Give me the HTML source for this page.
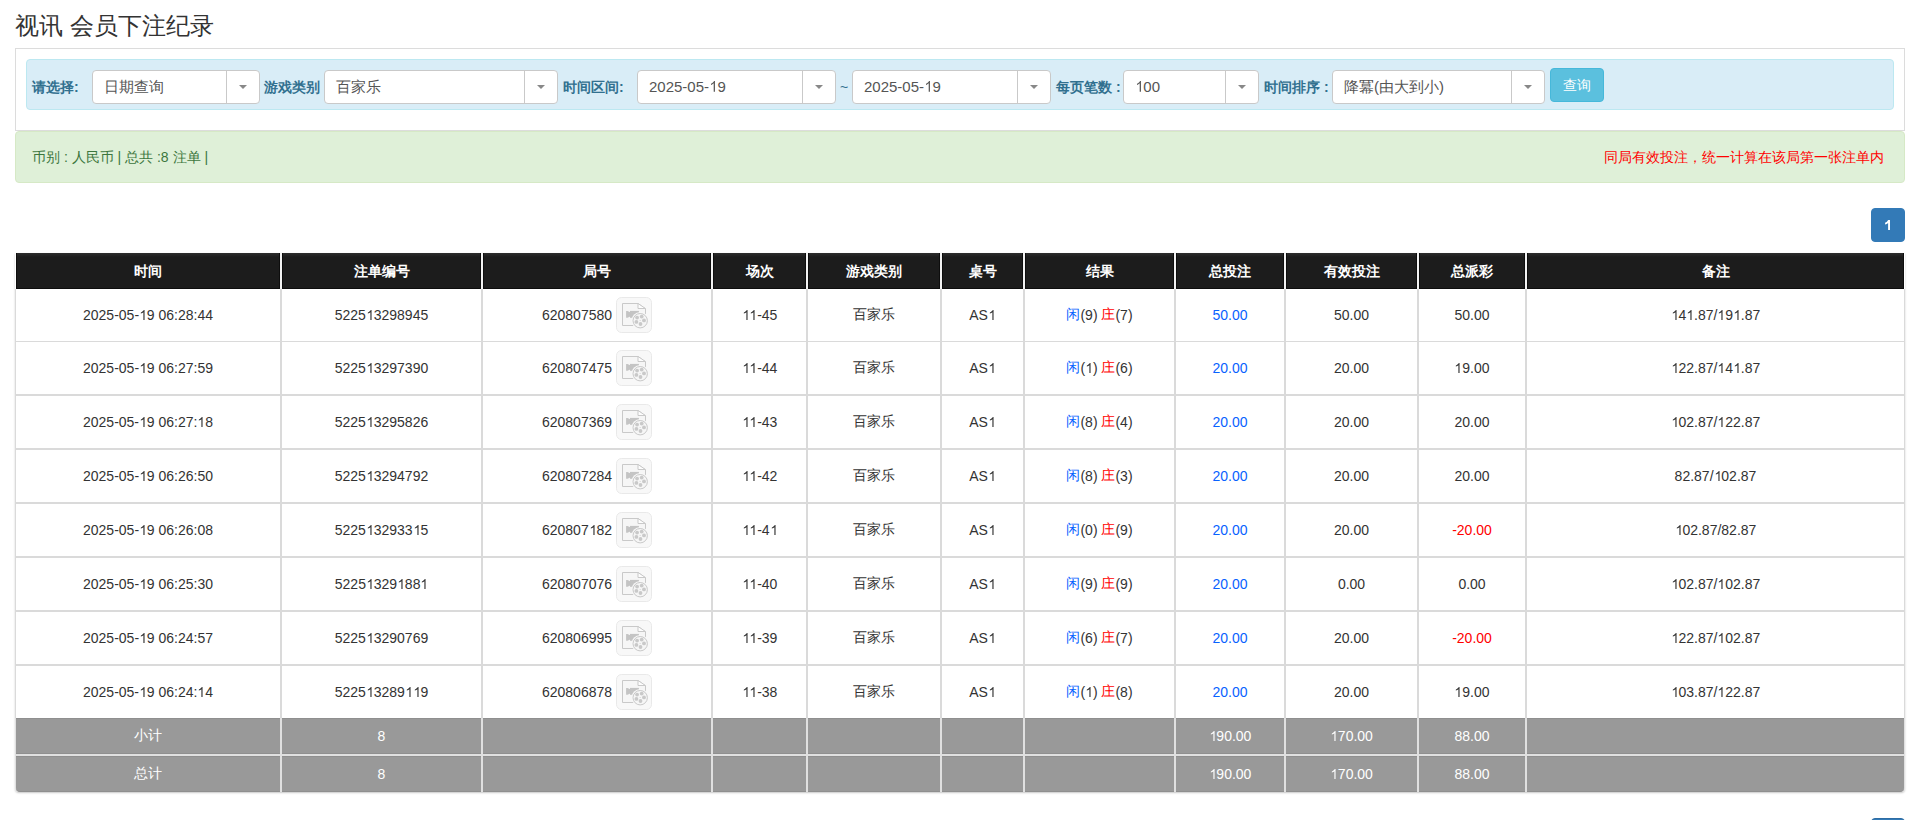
<!DOCTYPE html><html><head><meta charset="utf-8"><style>
*{box-sizing:border-box}
html,body{margin:0;padding:0;background:#fff;width:1919px;height:820px;overflow:hidden;font-family:"Liberation Sans",sans-serif;font-size:14px;color:#333}
.a{position:absolute}
.c{position:absolute;display:flex;align-items:center;justify-content:center;white-space:nowrap}
.th{padding-top:2px;background:linear-gradient(#2d2d2d,#1c1c1c 4px);color:#fff;font-weight:bold;border:1px solid #0d0d0d;border-top:0}
.td{background:#fff}
.bl{border-bottom-left-radius:4px}.br{border-bottom-right-radius:4px}
.tf{background:#999;color:#fff;border-top:1px solid #8f8f8f;border-bottom:1px solid #8f8f8f}
.one{width:0.5562em;height:0.7158em;vertical-align:baseline;fill:currentColor;overflow:visible}
.blue{color:#0862ff}
.red{color:#f00}
.lbl{position:absolute;color:#31708f;font-weight:bold;white-space:nowrap}
.sel{position:absolute;background:#fff;border:1px solid #c9c9c9;border-radius:4px;height:34px;top:70px}
.sel .t{position:absolute;left:11px;top:0;line-height:32px;font-size:15px;color:#555;white-space:nowrap}
.sel .d{position:absolute;top:0;bottom:0;width:1px;background:#c9c9c9}
.sel .ar{position:absolute;top:14px;width:0;height:0;border-left:4px solid transparent;border-right:4px solid transparent;border-top:4px solid #888}
</style></head><body>

<div class="a" style="left:15px;top:12px;font-size:24px;line-height:28px;color:#333;white-space:nowrap">视讯 会员下注纪录</div>
<div class="a" style="left:15px;top:48px;width:1890px;height:83px;border:1px solid #dcdcdc;background:#fff"></div>
<div class="a" style="left:26px;top:59px;width:1868px;height:51px;border:1px solid #bce8f1;border-radius:4px;background:#d9edf7"></div>
<div class="lbl" style="left:32px;top:78px;line-height:18px">请选择:</div>
<div class="lbl" style="left:264px;top:78px;line-height:18px">游戏类别</div>
<div class="lbl" style="left:563px;top:78px;line-height:18px">时间区间:</div>
<div class="lbl" style="left:1056px;top:78px;line-height:18px">每页笔数 :</div>
<div class="lbl" style="left:1264px;top:78px;line-height:18px">时间排序 :</div>
<div class="a" style="left:840px;top:78px;line-height:18px;color:#31708f">~</div>
<div class="sel" style="left:92px;width:168px"><div class="t">日期查询</div><div class="d" style="left:133px"></div><div class="ar" style="left:146px"></div></div>
<div class="sel" style="left:324px;width:234px"><div class="t">百家乐</div><div class="d" style="left:199px"></div><div class="ar" style="left:212px"></div></div>
<div class="sel" style="left:637px;width:199px"><div class="t">2025-05-<svg class="one" viewBox="0 -1466 1139 1466"><path d="M813 0 H643 V-1147 C590 -1106 533 -1065 463 -1024 C393 -983 330 -952 273 -930 V-1104 C373 -1151 460 -1208 535 -1274 C610 -1340 663 -1404 695 -1466 H813 Z"/></svg>9</div><div class="d" style="left:164px"></div><div class="ar" style="left:177px"></div></div>
<div class="sel" style="left:852px;width:199px"><div class="t">2025-05-<svg class="one" viewBox="0 -1466 1139 1466"><path d="M813 0 H643 V-1147 C590 -1106 533 -1065 463 -1024 C393 -983 330 -952 273 -930 V-1104 C373 -1151 460 -1208 535 -1274 C610 -1340 663 -1404 695 -1466 H813 Z"/></svg>9</div><div class="d" style="left:164px"></div><div class="ar" style="left:177px"></div></div>
<div class="sel" style="left:1123px;width:136px"><div class="t"><svg class="one" viewBox="0 -1466 1139 1466"><path d="M813 0 H643 V-1147 C590 -1106 533 -1065 463 -1024 C393 -983 330 -952 273 -930 V-1104 C373 -1151 460 -1208 535 -1274 C610 -1340 663 -1404 695 -1466 H813 Z"/></svg>00</div><div class="d" style="left:101px"></div><div class="ar" style="left:114px"></div></div>
<div class="sel" style="left:1332px;width:213px"><div class="t">降冪(由大到小)</div><div class="d" style="left:178px"></div><div class="ar" style="left:191px"></div></div>
<div class="a" style="left:1550px;top:68px;width:54px;height:34px;background:#5bc0de;border:1px solid #46b8da;border-radius:4px;color:#fff;display:flex;align-items:center;justify-content:center;padding-top:2px">查询</div>
<div class="a" style="left:15px;top:131px;width:1890px;height:52px;background:#dff0d8;border:1px solid #d6e9c6;border-radius:4px"></div>
<div class="a" style="left:32px;top:148px;line-height:18px;color:#3c763d;white-space:nowrap">币别 : 人民币 | 总共 :8 注单 |</div>
<div class="a" style="right:35px;top:148px;line-height:18px;color:#f00;white-space:nowrap">同局有效投注，统一计算在该局第一张注单内</div>
<div class="a" style="left:1871px;top:208px;width:34px;height:34px;background:#337ab7;border:1px solid #337ab7;border-radius:4px"><svg width="34" height="34" style="position:absolute;left:-1px;top:-1px" viewBox="0 0 34 34"><path d="M17.1 12 H19 V22 H17.1 V14.9 Q16 15.9 14.1 16.5 V14.8 Q16.2 14 17.1 12 Z" fill="#fff"/></svg></div>
<div class="a" style="left:1871px;top:818px;width:34px;height:34px;background:#337ab7;border:1px solid #2e6da4;border-radius:4px"></div>
<div class="a" style="left:15px;top:253px;width:1890px;height:539px;background:#fff;box-shadow:0 1px 2px rgba(0,0,0,.22);border-radius:0 0 4px 4px"></div>
<div class="a" style="left:16px;top:253px;width:1888px;height:36px;background:#f2f2f2"></div>
<div class="c th" style="left:16px;top:253px;width:264px;height:36px">时间</div>
<div class="c th" style="left:282px;top:253px;width:199px;height:36px">注单编号</div>
<div class="c th" style="left:483px;top:253px;width:228px;height:36px">局号</div>
<div class="c th" style="left:713px;top:253px;width:93px;height:36px">场次</div>
<div class="c th" style="left:808px;top:253px;width:132px;height:36px">游戏类别</div>
<div class="c th" style="left:942px;top:253px;width:81px;height:36px">桌号</div>
<div class="c th" style="left:1025px;top:253px;width:149px;height:36px">结果</div>
<div class="c th" style="left:1176px;top:253px;width:108px;height:36px">总投注</div>
<div class="c th" style="left:1286px;top:253px;width:131px;height:36px">有效投注</div>
<div class="c th" style="left:1419px;top:253px;width:106px;height:36px">总派彩</div>
<div class="c th" style="left:1527px;top:253px;width:377px;height:36px">备注</div>
<div class="a" style="left:15px;top:289px;width:1890px;height:429px;background:#dadada"></div>
<div class="c td" style="left:16px;top:289px;width:264px;height:52px">2025-05-<svg class="one" viewBox="0 -1466 1139 1466"><path d="M813 0 H643 V-1147 C590 -1106 533 -1065 463 -1024 C393 -983 330 -952 273 -930 V-1104 C373 -1151 460 -1208 535 -1274 C610 -1340 663 -1404 695 -1466 H813 Z"/></svg>9 06:28:44</div>
<div class="c td" style="left:282px;top:289px;width:199px;height:52px">5225<svg class="one" viewBox="0 -1466 1139 1466"><path d="M813 0 H643 V-1147 C590 -1106 533 -1065 463 -1024 C393 -983 330 -952 273 -930 V-1104 C373 -1151 460 -1208 535 -1274 C610 -1340 663 -1404 695 -1466 H813 Z"/></svg>3298945</div>
<div class="c td" style="left:483px;top:289px;width:228px;height:52px">620807580<span style="display:inline-block;width:36px;height:36px;margin-left:4px"><svg width="36" height="36" viewBox="0 0 36 36" style="display:block"><rect x="0.5" y="0.5" width="35" height="35" rx="5" fill="#f8f8f8" stroke="#e9e9e9"/>
<path d="M6.5 6.5 H22.2 L29.5 12 V28.5 H6.5 Z" fill="#f6f6f6" stroke="#c9c9c9" stroke-width="1"/><path d="M22 6.5 V11.5 H29.5 Z" fill="#fdfdfd" stroke="#c9c9c9" stroke-width="1" stroke-linejoin="round"/>
<rect x="14" y="13.9" width="8.9" height="6.9" fill="#c4c4c4"/><path d="M10.1 13.9 L11.5 13.9 L14.2 15.3 V19.4 L11.5 20.8 L10.1 20.8 Z" fill="#c4c4c4"/>
<circle cx="24.2" cy="23.7" r="8.7" fill="#f8f8f8"/>
<circle cx="24.2" cy="23.7" r="7.2" fill="#f6f6f6" stroke="#c9c9c9" stroke-width="1"/>
<circle cx="21.1" cy="20.6" r="1.9" fill="#c9c9c9"/><circle cx="25.7" cy="19.6" r="1.9" fill="#c9c9c9"/><circle cx="28" cy="23.4" r="1.9" fill="#c9c9c9"/><circle cx="24.5" cy="27" r="1.9" fill="#c9c9c9"/><circle cx="20.4" cy="24.9" r="1.9" fill="#c9c9c9"/><rect x="23.6" y="23.1" width="1.2" height="0.8" fill="#d3d3d3"/>
</svg></span></div>
<div class="c td" style="left:713px;top:289px;width:93px;height:52px"><svg class="one" viewBox="0 -1466 1139 1466"><path d="M813 0 H643 V-1147 C590 -1106 533 -1065 463 -1024 C393 -983 330 -952 273 -930 V-1104 C373 -1151 460 -1208 535 -1274 C610 -1340 663 -1404 695 -1466 H813 Z"/></svg><svg class="one" viewBox="0 -1466 1139 1466"><path d="M813 0 H643 V-1147 C590 -1106 533 -1065 463 -1024 C393 -983 330 -952 273 -930 V-1104 C373 -1151 460 -1208 535 -1274 C610 -1340 663 -1404 695 -1466 H813 Z"/></svg>-45</div>
<div class="c td" style="left:808px;top:289px;width:132px;height:52px">百家乐</div>
<div class="c td" style="left:942px;top:289px;width:81px;height:52px">AS<svg class="one" viewBox="0 -1466 1139 1466"><path d="M813 0 H643 V-1147 C590 -1106 533 -1065 463 -1024 C393 -983 330 -952 273 -930 V-1104 C373 -1151 460 -1208 535 -1274 C610 -1340 663 -1404 695 -1466 H813 Z"/></svg></div>
<div class="c td" style="left:1025px;top:289px;width:149px;height:52px"><span class="blue">闲</span>(9)&nbsp;<span class="red">庄</span>(7)</div>
<div class="c td" style="left:1176px;top:289px;width:108px;height:52px"><span class="blue">50.00</span></div>
<div class="c td" style="left:1286px;top:289px;width:131px;height:52px">50.00</div>
<div class="c td" style="left:1419px;top:289px;width:106px;height:52px">50.00</div>
<div class="c td" style="left:1527px;top:289px;width:377px;height:52px"><svg class="one" viewBox="0 -1466 1139 1466"><path d="M813 0 H643 V-1147 C590 -1106 533 -1065 463 -1024 C393 -983 330 -952 273 -930 V-1104 C373 -1151 460 -1208 535 -1274 C610 -1340 663 -1404 695 -1466 H813 Z"/></svg>4<svg class="one" viewBox="0 -1466 1139 1466"><path d="M813 0 H643 V-1147 C590 -1106 533 -1065 463 -1024 C393 -983 330 -952 273 -930 V-1104 C373 -1151 460 -1208 535 -1274 C610 -1340 663 -1404 695 -1466 H813 Z"/></svg>.87/<svg class="one" viewBox="0 -1466 1139 1466"><path d="M813 0 H643 V-1147 C590 -1106 533 -1065 463 -1024 C393 -983 330 -952 273 -930 V-1104 C373 -1151 460 -1208 535 -1274 C610 -1340 663 -1404 695 -1466 H813 Z"/></svg>9<svg class="one" viewBox="0 -1466 1139 1466"><path d="M813 0 H643 V-1147 C590 -1106 533 -1065 463 -1024 C393 -983 330 -952 273 -930 V-1104 C373 -1151 460 -1208 535 -1274 C610 -1340 663 -1404 695 -1466 H813 Z"/></svg>.87</div>
<div class="c td" style="left:16px;top:342px;width:264px;height:52px">2025-05-<svg class="one" viewBox="0 -1466 1139 1466"><path d="M813 0 H643 V-1147 C590 -1106 533 -1065 463 -1024 C393 -983 330 -952 273 -930 V-1104 C373 -1151 460 -1208 535 -1274 C610 -1340 663 -1404 695 -1466 H813 Z"/></svg>9 06:27:59</div>
<div class="c td" style="left:282px;top:342px;width:199px;height:52px">5225<svg class="one" viewBox="0 -1466 1139 1466"><path d="M813 0 H643 V-1147 C590 -1106 533 -1065 463 -1024 C393 -983 330 -952 273 -930 V-1104 C373 -1151 460 -1208 535 -1274 C610 -1340 663 -1404 695 -1466 H813 Z"/></svg>3297390</div>
<div class="c td" style="left:483px;top:342px;width:228px;height:52px">620807475<span style="display:inline-block;width:36px;height:36px;margin-left:4px"><svg width="36" height="36" viewBox="0 0 36 36" style="display:block"><rect x="0.5" y="0.5" width="35" height="35" rx="5" fill="#f8f8f8" stroke="#e9e9e9"/>
<path d="M6.5 6.5 H22.2 L29.5 12 V28.5 H6.5 Z" fill="#f6f6f6" stroke="#c9c9c9" stroke-width="1"/><path d="M22 6.5 V11.5 H29.5 Z" fill="#fdfdfd" stroke="#c9c9c9" stroke-width="1" stroke-linejoin="round"/>
<rect x="14" y="13.9" width="8.9" height="6.9" fill="#c4c4c4"/><path d="M10.1 13.9 L11.5 13.9 L14.2 15.3 V19.4 L11.5 20.8 L10.1 20.8 Z" fill="#c4c4c4"/>
<circle cx="24.2" cy="23.7" r="8.7" fill="#f8f8f8"/>
<circle cx="24.2" cy="23.7" r="7.2" fill="#f6f6f6" stroke="#c9c9c9" stroke-width="1"/>
<circle cx="21.1" cy="20.6" r="1.9" fill="#c9c9c9"/><circle cx="25.7" cy="19.6" r="1.9" fill="#c9c9c9"/><circle cx="28" cy="23.4" r="1.9" fill="#c9c9c9"/><circle cx="24.5" cy="27" r="1.9" fill="#c9c9c9"/><circle cx="20.4" cy="24.9" r="1.9" fill="#c9c9c9"/><rect x="23.6" y="23.1" width="1.2" height="0.8" fill="#d3d3d3"/>
</svg></span></div>
<div class="c td" style="left:713px;top:342px;width:93px;height:52px"><svg class="one" viewBox="0 -1466 1139 1466"><path d="M813 0 H643 V-1147 C590 -1106 533 -1065 463 -1024 C393 -983 330 -952 273 -930 V-1104 C373 -1151 460 -1208 535 -1274 C610 -1340 663 -1404 695 -1466 H813 Z"/></svg><svg class="one" viewBox="0 -1466 1139 1466"><path d="M813 0 H643 V-1147 C590 -1106 533 -1065 463 -1024 C393 -983 330 -952 273 -930 V-1104 C373 -1151 460 -1208 535 -1274 C610 -1340 663 -1404 695 -1466 H813 Z"/></svg>-44</div>
<div class="c td" style="left:808px;top:342px;width:132px;height:52px">百家乐</div>
<div class="c td" style="left:942px;top:342px;width:81px;height:52px">AS<svg class="one" viewBox="0 -1466 1139 1466"><path d="M813 0 H643 V-1147 C590 -1106 533 -1065 463 -1024 C393 -983 330 -952 273 -930 V-1104 C373 -1151 460 -1208 535 -1274 C610 -1340 663 -1404 695 -1466 H813 Z"/></svg></div>
<div class="c td" style="left:1025px;top:342px;width:149px;height:52px"><span class="blue">闲</span>(<svg class="one" viewBox="0 -1466 1139 1466"><path d="M813 0 H643 V-1147 C590 -1106 533 -1065 463 -1024 C393 -983 330 -952 273 -930 V-1104 C373 -1151 460 -1208 535 -1274 C610 -1340 663 -1404 695 -1466 H813 Z"/></svg>)&nbsp;<span class="red">庄</span>(6)</div>
<div class="c td" style="left:1176px;top:342px;width:108px;height:52px"><span class="blue">20.00</span></div>
<div class="c td" style="left:1286px;top:342px;width:131px;height:52px">20.00</div>
<div class="c td" style="left:1419px;top:342px;width:106px;height:52px"><svg class="one" viewBox="0 -1466 1139 1466"><path d="M813 0 H643 V-1147 C590 -1106 533 -1065 463 -1024 C393 -983 330 -952 273 -930 V-1104 C373 -1151 460 -1208 535 -1274 C610 -1340 663 -1404 695 -1466 H813 Z"/></svg>9.00</div>
<div class="c td" style="left:1527px;top:342px;width:377px;height:52px"><svg class="one" viewBox="0 -1466 1139 1466"><path d="M813 0 H643 V-1147 C590 -1106 533 -1065 463 -1024 C393 -983 330 -952 273 -930 V-1104 C373 -1151 460 -1208 535 -1274 C610 -1340 663 -1404 695 -1466 H813 Z"/></svg>22.87/<svg class="one" viewBox="0 -1466 1139 1466"><path d="M813 0 H643 V-1147 C590 -1106 533 -1065 463 -1024 C393 -983 330 -952 273 -930 V-1104 C373 -1151 460 -1208 535 -1274 C610 -1340 663 -1404 695 -1466 H813 Z"/></svg>4<svg class="one" viewBox="0 -1466 1139 1466"><path d="M813 0 H643 V-1147 C590 -1106 533 -1065 463 -1024 C393 -983 330 -952 273 -930 V-1104 C373 -1151 460 -1208 535 -1274 C610 -1340 663 -1404 695 -1466 H813 Z"/></svg>.87</div>
<div class="c td" style="left:16px;top:396px;width:264px;height:52px">2025-05-<svg class="one" viewBox="0 -1466 1139 1466"><path d="M813 0 H643 V-1147 C590 -1106 533 -1065 463 -1024 C393 -983 330 -952 273 -930 V-1104 C373 -1151 460 -1208 535 -1274 C610 -1340 663 -1404 695 -1466 H813 Z"/></svg>9 06:27:<svg class="one" viewBox="0 -1466 1139 1466"><path d="M813 0 H643 V-1147 C590 -1106 533 -1065 463 -1024 C393 -983 330 -952 273 -930 V-1104 C373 -1151 460 -1208 535 -1274 C610 -1340 663 -1404 695 -1466 H813 Z"/></svg>8</div>
<div class="c td" style="left:282px;top:396px;width:199px;height:52px">5225<svg class="one" viewBox="0 -1466 1139 1466"><path d="M813 0 H643 V-1147 C590 -1106 533 -1065 463 -1024 C393 -983 330 -952 273 -930 V-1104 C373 -1151 460 -1208 535 -1274 C610 -1340 663 -1404 695 -1466 H813 Z"/></svg>3295826</div>
<div class="c td" style="left:483px;top:396px;width:228px;height:52px">620807369<span style="display:inline-block;width:36px;height:36px;margin-left:4px"><svg width="36" height="36" viewBox="0 0 36 36" style="display:block"><rect x="0.5" y="0.5" width="35" height="35" rx="5" fill="#f8f8f8" stroke="#e9e9e9"/>
<path d="M6.5 6.5 H22.2 L29.5 12 V28.5 H6.5 Z" fill="#f6f6f6" stroke="#c9c9c9" stroke-width="1"/><path d="M22 6.5 V11.5 H29.5 Z" fill="#fdfdfd" stroke="#c9c9c9" stroke-width="1" stroke-linejoin="round"/>
<rect x="14" y="13.9" width="8.9" height="6.9" fill="#c4c4c4"/><path d="M10.1 13.9 L11.5 13.9 L14.2 15.3 V19.4 L11.5 20.8 L10.1 20.8 Z" fill="#c4c4c4"/>
<circle cx="24.2" cy="23.7" r="8.7" fill="#f8f8f8"/>
<circle cx="24.2" cy="23.7" r="7.2" fill="#f6f6f6" stroke="#c9c9c9" stroke-width="1"/>
<circle cx="21.1" cy="20.6" r="1.9" fill="#c9c9c9"/><circle cx="25.7" cy="19.6" r="1.9" fill="#c9c9c9"/><circle cx="28" cy="23.4" r="1.9" fill="#c9c9c9"/><circle cx="24.5" cy="27" r="1.9" fill="#c9c9c9"/><circle cx="20.4" cy="24.9" r="1.9" fill="#c9c9c9"/><rect x="23.6" y="23.1" width="1.2" height="0.8" fill="#d3d3d3"/>
</svg></span></div>
<div class="c td" style="left:713px;top:396px;width:93px;height:52px"><svg class="one" viewBox="0 -1466 1139 1466"><path d="M813 0 H643 V-1147 C590 -1106 533 -1065 463 -1024 C393 -983 330 -952 273 -930 V-1104 C373 -1151 460 -1208 535 -1274 C610 -1340 663 -1404 695 -1466 H813 Z"/></svg><svg class="one" viewBox="0 -1466 1139 1466"><path d="M813 0 H643 V-1147 C590 -1106 533 -1065 463 -1024 C393 -983 330 -952 273 -930 V-1104 C373 -1151 460 -1208 535 -1274 C610 -1340 663 -1404 695 -1466 H813 Z"/></svg>-43</div>
<div class="c td" style="left:808px;top:396px;width:132px;height:52px">百家乐</div>
<div class="c td" style="left:942px;top:396px;width:81px;height:52px">AS<svg class="one" viewBox="0 -1466 1139 1466"><path d="M813 0 H643 V-1147 C590 -1106 533 -1065 463 -1024 C393 -983 330 -952 273 -930 V-1104 C373 -1151 460 -1208 535 -1274 C610 -1340 663 -1404 695 -1466 H813 Z"/></svg></div>
<div class="c td" style="left:1025px;top:396px;width:149px;height:52px"><span class="blue">闲</span>(8)&nbsp;<span class="red">庄</span>(4)</div>
<div class="c td" style="left:1176px;top:396px;width:108px;height:52px"><span class="blue">20.00</span></div>
<div class="c td" style="left:1286px;top:396px;width:131px;height:52px">20.00</div>
<div class="c td" style="left:1419px;top:396px;width:106px;height:52px">20.00</div>
<div class="c td" style="left:1527px;top:396px;width:377px;height:52px"><svg class="one" viewBox="0 -1466 1139 1466"><path d="M813 0 H643 V-1147 C590 -1106 533 -1065 463 -1024 C393 -983 330 -952 273 -930 V-1104 C373 -1151 460 -1208 535 -1274 C610 -1340 663 -1404 695 -1466 H813 Z"/></svg>02.87/<svg class="one" viewBox="0 -1466 1139 1466"><path d="M813 0 H643 V-1147 C590 -1106 533 -1065 463 -1024 C393 -983 330 -952 273 -930 V-1104 C373 -1151 460 -1208 535 -1274 C610 -1340 663 -1404 695 -1466 H813 Z"/></svg>22.87</div>
<div class="c td" style="left:16px;top:450px;width:264px;height:52px">2025-05-<svg class="one" viewBox="0 -1466 1139 1466"><path d="M813 0 H643 V-1147 C590 -1106 533 -1065 463 -1024 C393 -983 330 -952 273 -930 V-1104 C373 -1151 460 -1208 535 -1274 C610 -1340 663 -1404 695 -1466 H813 Z"/></svg>9 06:26:50</div>
<div class="c td" style="left:282px;top:450px;width:199px;height:52px">5225<svg class="one" viewBox="0 -1466 1139 1466"><path d="M813 0 H643 V-1147 C590 -1106 533 -1065 463 -1024 C393 -983 330 -952 273 -930 V-1104 C373 -1151 460 -1208 535 -1274 C610 -1340 663 -1404 695 -1466 H813 Z"/></svg>3294792</div>
<div class="c td" style="left:483px;top:450px;width:228px;height:52px">620807284<span style="display:inline-block;width:36px;height:36px;margin-left:4px"><svg width="36" height="36" viewBox="0 0 36 36" style="display:block"><rect x="0.5" y="0.5" width="35" height="35" rx="5" fill="#f8f8f8" stroke="#e9e9e9"/>
<path d="M6.5 6.5 H22.2 L29.5 12 V28.5 H6.5 Z" fill="#f6f6f6" stroke="#c9c9c9" stroke-width="1"/><path d="M22 6.5 V11.5 H29.5 Z" fill="#fdfdfd" stroke="#c9c9c9" stroke-width="1" stroke-linejoin="round"/>
<rect x="14" y="13.9" width="8.9" height="6.9" fill="#c4c4c4"/><path d="M10.1 13.9 L11.5 13.9 L14.2 15.3 V19.4 L11.5 20.8 L10.1 20.8 Z" fill="#c4c4c4"/>
<circle cx="24.2" cy="23.7" r="8.7" fill="#f8f8f8"/>
<circle cx="24.2" cy="23.7" r="7.2" fill="#f6f6f6" stroke="#c9c9c9" stroke-width="1"/>
<circle cx="21.1" cy="20.6" r="1.9" fill="#c9c9c9"/><circle cx="25.7" cy="19.6" r="1.9" fill="#c9c9c9"/><circle cx="28" cy="23.4" r="1.9" fill="#c9c9c9"/><circle cx="24.5" cy="27" r="1.9" fill="#c9c9c9"/><circle cx="20.4" cy="24.9" r="1.9" fill="#c9c9c9"/><rect x="23.6" y="23.1" width="1.2" height="0.8" fill="#d3d3d3"/>
</svg></span></div>
<div class="c td" style="left:713px;top:450px;width:93px;height:52px"><svg class="one" viewBox="0 -1466 1139 1466"><path d="M813 0 H643 V-1147 C590 -1106 533 -1065 463 -1024 C393 -983 330 -952 273 -930 V-1104 C373 -1151 460 -1208 535 -1274 C610 -1340 663 -1404 695 -1466 H813 Z"/></svg><svg class="one" viewBox="0 -1466 1139 1466"><path d="M813 0 H643 V-1147 C590 -1106 533 -1065 463 -1024 C393 -983 330 -952 273 -930 V-1104 C373 -1151 460 -1208 535 -1274 C610 -1340 663 -1404 695 -1466 H813 Z"/></svg>-42</div>
<div class="c td" style="left:808px;top:450px;width:132px;height:52px">百家乐</div>
<div class="c td" style="left:942px;top:450px;width:81px;height:52px">AS<svg class="one" viewBox="0 -1466 1139 1466"><path d="M813 0 H643 V-1147 C590 -1106 533 -1065 463 -1024 C393 -983 330 -952 273 -930 V-1104 C373 -1151 460 -1208 535 -1274 C610 -1340 663 -1404 695 -1466 H813 Z"/></svg></div>
<div class="c td" style="left:1025px;top:450px;width:149px;height:52px"><span class="blue">闲</span>(8)&nbsp;<span class="red">庄</span>(3)</div>
<div class="c td" style="left:1176px;top:450px;width:108px;height:52px"><span class="blue">20.00</span></div>
<div class="c td" style="left:1286px;top:450px;width:131px;height:52px">20.00</div>
<div class="c td" style="left:1419px;top:450px;width:106px;height:52px">20.00</div>
<div class="c td" style="left:1527px;top:450px;width:377px;height:52px">82.87/<svg class="one" viewBox="0 -1466 1139 1466"><path d="M813 0 H643 V-1147 C590 -1106 533 -1065 463 -1024 C393 -983 330 -952 273 -930 V-1104 C373 -1151 460 -1208 535 -1274 C610 -1340 663 -1404 695 -1466 H813 Z"/></svg>02.87</div>
<div class="c td" style="left:16px;top:504px;width:264px;height:52px">2025-05-<svg class="one" viewBox="0 -1466 1139 1466"><path d="M813 0 H643 V-1147 C590 -1106 533 -1065 463 -1024 C393 -983 330 -952 273 -930 V-1104 C373 -1151 460 -1208 535 -1274 C610 -1340 663 -1404 695 -1466 H813 Z"/></svg>9 06:26:08</div>
<div class="c td" style="left:282px;top:504px;width:199px;height:52px">5225<svg class="one" viewBox="0 -1466 1139 1466"><path d="M813 0 H643 V-1147 C590 -1106 533 -1065 463 -1024 C393 -983 330 -952 273 -930 V-1104 C373 -1151 460 -1208 535 -1274 C610 -1340 663 -1404 695 -1466 H813 Z"/></svg>32933<svg class="one" viewBox="0 -1466 1139 1466"><path d="M813 0 H643 V-1147 C590 -1106 533 -1065 463 -1024 C393 -983 330 -952 273 -930 V-1104 C373 -1151 460 -1208 535 -1274 C610 -1340 663 -1404 695 -1466 H813 Z"/></svg>5</div>
<div class="c td" style="left:483px;top:504px;width:228px;height:52px">620807<svg class="one" viewBox="0 -1466 1139 1466"><path d="M813 0 H643 V-1147 C590 -1106 533 -1065 463 -1024 C393 -983 330 -952 273 -930 V-1104 C373 -1151 460 -1208 535 -1274 C610 -1340 663 -1404 695 -1466 H813 Z"/></svg>82<span style="display:inline-block;width:36px;height:36px;margin-left:4px"><svg width="36" height="36" viewBox="0 0 36 36" style="display:block"><rect x="0.5" y="0.5" width="35" height="35" rx="5" fill="#f8f8f8" stroke="#e9e9e9"/>
<path d="M6.5 6.5 H22.2 L29.5 12 V28.5 H6.5 Z" fill="#f6f6f6" stroke="#c9c9c9" stroke-width="1"/><path d="M22 6.5 V11.5 H29.5 Z" fill="#fdfdfd" stroke="#c9c9c9" stroke-width="1" stroke-linejoin="round"/>
<rect x="14" y="13.9" width="8.9" height="6.9" fill="#c4c4c4"/><path d="M10.1 13.9 L11.5 13.9 L14.2 15.3 V19.4 L11.5 20.8 L10.1 20.8 Z" fill="#c4c4c4"/>
<circle cx="24.2" cy="23.7" r="8.7" fill="#f8f8f8"/>
<circle cx="24.2" cy="23.7" r="7.2" fill="#f6f6f6" stroke="#c9c9c9" stroke-width="1"/>
<circle cx="21.1" cy="20.6" r="1.9" fill="#c9c9c9"/><circle cx="25.7" cy="19.6" r="1.9" fill="#c9c9c9"/><circle cx="28" cy="23.4" r="1.9" fill="#c9c9c9"/><circle cx="24.5" cy="27" r="1.9" fill="#c9c9c9"/><circle cx="20.4" cy="24.9" r="1.9" fill="#c9c9c9"/><rect x="23.6" y="23.1" width="1.2" height="0.8" fill="#d3d3d3"/>
</svg></span></div>
<div class="c td" style="left:713px;top:504px;width:93px;height:52px"><svg class="one" viewBox="0 -1466 1139 1466"><path d="M813 0 H643 V-1147 C590 -1106 533 -1065 463 -1024 C393 -983 330 -952 273 -930 V-1104 C373 -1151 460 -1208 535 -1274 C610 -1340 663 -1404 695 -1466 H813 Z"/></svg><svg class="one" viewBox="0 -1466 1139 1466"><path d="M813 0 H643 V-1147 C590 -1106 533 -1065 463 -1024 C393 -983 330 -952 273 -930 V-1104 C373 -1151 460 -1208 535 -1274 C610 -1340 663 -1404 695 -1466 H813 Z"/></svg>-4<svg class="one" viewBox="0 -1466 1139 1466"><path d="M813 0 H643 V-1147 C590 -1106 533 -1065 463 -1024 C393 -983 330 -952 273 -930 V-1104 C373 -1151 460 -1208 535 -1274 C610 -1340 663 -1404 695 -1466 H813 Z"/></svg></div>
<div class="c td" style="left:808px;top:504px;width:132px;height:52px">百家乐</div>
<div class="c td" style="left:942px;top:504px;width:81px;height:52px">AS<svg class="one" viewBox="0 -1466 1139 1466"><path d="M813 0 H643 V-1147 C590 -1106 533 -1065 463 -1024 C393 -983 330 -952 273 -930 V-1104 C373 -1151 460 -1208 535 -1274 C610 -1340 663 -1404 695 -1466 H813 Z"/></svg></div>
<div class="c td" style="left:1025px;top:504px;width:149px;height:52px"><span class="blue">闲</span>(0)&nbsp;<span class="red">庄</span>(9)</div>
<div class="c td" style="left:1176px;top:504px;width:108px;height:52px"><span class="blue">20.00</span></div>
<div class="c td" style="left:1286px;top:504px;width:131px;height:52px">20.00</div>
<div class="c td" style="left:1419px;top:504px;width:106px;height:52px"><span class="red">-20.00</span></div>
<div class="c td" style="left:1527px;top:504px;width:377px;height:52px"><svg class="one" viewBox="0 -1466 1139 1466"><path d="M813 0 H643 V-1147 C590 -1106 533 -1065 463 -1024 C393 -983 330 -952 273 -930 V-1104 C373 -1151 460 -1208 535 -1274 C610 -1340 663 -1404 695 -1466 H813 Z"/></svg>02.87/82.87</div>
<div class="c td" style="left:16px;top:558px;width:264px;height:52px">2025-05-<svg class="one" viewBox="0 -1466 1139 1466"><path d="M813 0 H643 V-1147 C590 -1106 533 -1065 463 -1024 C393 -983 330 -952 273 -930 V-1104 C373 -1151 460 -1208 535 -1274 C610 -1340 663 -1404 695 -1466 H813 Z"/></svg>9 06:25:30</div>
<div class="c td" style="left:282px;top:558px;width:199px;height:52px">5225<svg class="one" viewBox="0 -1466 1139 1466"><path d="M813 0 H643 V-1147 C590 -1106 533 -1065 463 -1024 C393 -983 330 -952 273 -930 V-1104 C373 -1151 460 -1208 535 -1274 C610 -1340 663 -1404 695 -1466 H813 Z"/></svg>329<svg class="one" viewBox="0 -1466 1139 1466"><path d="M813 0 H643 V-1147 C590 -1106 533 -1065 463 -1024 C393 -983 330 -952 273 -930 V-1104 C373 -1151 460 -1208 535 -1274 C610 -1340 663 -1404 695 -1466 H813 Z"/></svg>88<svg class="one" viewBox="0 -1466 1139 1466"><path d="M813 0 H643 V-1147 C590 -1106 533 -1065 463 -1024 C393 -983 330 -952 273 -930 V-1104 C373 -1151 460 -1208 535 -1274 C610 -1340 663 -1404 695 -1466 H813 Z"/></svg></div>
<div class="c td" style="left:483px;top:558px;width:228px;height:52px">620807076<span style="display:inline-block;width:36px;height:36px;margin-left:4px"><svg width="36" height="36" viewBox="0 0 36 36" style="display:block"><rect x="0.5" y="0.5" width="35" height="35" rx="5" fill="#f8f8f8" stroke="#e9e9e9"/>
<path d="M6.5 6.5 H22.2 L29.5 12 V28.5 H6.5 Z" fill="#f6f6f6" stroke="#c9c9c9" stroke-width="1"/><path d="M22 6.5 V11.5 H29.5 Z" fill="#fdfdfd" stroke="#c9c9c9" stroke-width="1" stroke-linejoin="round"/>
<rect x="14" y="13.9" width="8.9" height="6.9" fill="#c4c4c4"/><path d="M10.1 13.9 L11.5 13.9 L14.2 15.3 V19.4 L11.5 20.8 L10.1 20.8 Z" fill="#c4c4c4"/>
<circle cx="24.2" cy="23.7" r="8.7" fill="#f8f8f8"/>
<circle cx="24.2" cy="23.7" r="7.2" fill="#f6f6f6" stroke="#c9c9c9" stroke-width="1"/>
<circle cx="21.1" cy="20.6" r="1.9" fill="#c9c9c9"/><circle cx="25.7" cy="19.6" r="1.9" fill="#c9c9c9"/><circle cx="28" cy="23.4" r="1.9" fill="#c9c9c9"/><circle cx="24.5" cy="27" r="1.9" fill="#c9c9c9"/><circle cx="20.4" cy="24.9" r="1.9" fill="#c9c9c9"/><rect x="23.6" y="23.1" width="1.2" height="0.8" fill="#d3d3d3"/>
</svg></span></div>
<div class="c td" style="left:713px;top:558px;width:93px;height:52px"><svg class="one" viewBox="0 -1466 1139 1466"><path d="M813 0 H643 V-1147 C590 -1106 533 -1065 463 -1024 C393 -983 330 -952 273 -930 V-1104 C373 -1151 460 -1208 535 -1274 C610 -1340 663 -1404 695 -1466 H813 Z"/></svg><svg class="one" viewBox="0 -1466 1139 1466"><path d="M813 0 H643 V-1147 C590 -1106 533 -1065 463 -1024 C393 -983 330 -952 273 -930 V-1104 C373 -1151 460 -1208 535 -1274 C610 -1340 663 -1404 695 -1466 H813 Z"/></svg>-40</div>
<div class="c td" style="left:808px;top:558px;width:132px;height:52px">百家乐</div>
<div class="c td" style="left:942px;top:558px;width:81px;height:52px">AS<svg class="one" viewBox="0 -1466 1139 1466"><path d="M813 0 H643 V-1147 C590 -1106 533 -1065 463 -1024 C393 -983 330 -952 273 -930 V-1104 C373 -1151 460 -1208 535 -1274 C610 -1340 663 -1404 695 -1466 H813 Z"/></svg></div>
<div class="c td" style="left:1025px;top:558px;width:149px;height:52px"><span class="blue">闲</span>(9)&nbsp;<span class="red">庄</span>(9)</div>
<div class="c td" style="left:1176px;top:558px;width:108px;height:52px"><span class="blue">20.00</span></div>
<div class="c td" style="left:1286px;top:558px;width:131px;height:52px">0.00</div>
<div class="c td" style="left:1419px;top:558px;width:106px;height:52px">0.00</div>
<div class="c td" style="left:1527px;top:558px;width:377px;height:52px"><svg class="one" viewBox="0 -1466 1139 1466"><path d="M813 0 H643 V-1147 C590 -1106 533 -1065 463 -1024 C393 -983 330 -952 273 -930 V-1104 C373 -1151 460 -1208 535 -1274 C610 -1340 663 -1404 695 -1466 H813 Z"/></svg>02.87/<svg class="one" viewBox="0 -1466 1139 1466"><path d="M813 0 H643 V-1147 C590 -1106 533 -1065 463 -1024 C393 -983 330 -952 273 -930 V-1104 C373 -1151 460 -1208 535 -1274 C610 -1340 663 -1404 695 -1466 H813 Z"/></svg>02.87</div>
<div class="c td" style="left:16px;top:612px;width:264px;height:52px">2025-05-<svg class="one" viewBox="0 -1466 1139 1466"><path d="M813 0 H643 V-1147 C590 -1106 533 -1065 463 -1024 C393 -983 330 -952 273 -930 V-1104 C373 -1151 460 -1208 535 -1274 C610 -1340 663 -1404 695 -1466 H813 Z"/></svg>9 06:24:57</div>
<div class="c td" style="left:282px;top:612px;width:199px;height:52px">5225<svg class="one" viewBox="0 -1466 1139 1466"><path d="M813 0 H643 V-1147 C590 -1106 533 -1065 463 -1024 C393 -983 330 -952 273 -930 V-1104 C373 -1151 460 -1208 535 -1274 C610 -1340 663 -1404 695 -1466 H813 Z"/></svg>3290769</div>
<div class="c td" style="left:483px;top:612px;width:228px;height:52px">620806995<span style="display:inline-block;width:36px;height:36px;margin-left:4px"><svg width="36" height="36" viewBox="0 0 36 36" style="display:block"><rect x="0.5" y="0.5" width="35" height="35" rx="5" fill="#f8f8f8" stroke="#e9e9e9"/>
<path d="M6.5 6.5 H22.2 L29.5 12 V28.5 H6.5 Z" fill="#f6f6f6" stroke="#c9c9c9" stroke-width="1"/><path d="M22 6.5 V11.5 H29.5 Z" fill="#fdfdfd" stroke="#c9c9c9" stroke-width="1" stroke-linejoin="round"/>
<rect x="14" y="13.9" width="8.9" height="6.9" fill="#c4c4c4"/><path d="M10.1 13.9 L11.5 13.9 L14.2 15.3 V19.4 L11.5 20.8 L10.1 20.8 Z" fill="#c4c4c4"/>
<circle cx="24.2" cy="23.7" r="8.7" fill="#f8f8f8"/>
<circle cx="24.2" cy="23.7" r="7.2" fill="#f6f6f6" stroke="#c9c9c9" stroke-width="1"/>
<circle cx="21.1" cy="20.6" r="1.9" fill="#c9c9c9"/><circle cx="25.7" cy="19.6" r="1.9" fill="#c9c9c9"/><circle cx="28" cy="23.4" r="1.9" fill="#c9c9c9"/><circle cx="24.5" cy="27" r="1.9" fill="#c9c9c9"/><circle cx="20.4" cy="24.9" r="1.9" fill="#c9c9c9"/><rect x="23.6" y="23.1" width="1.2" height="0.8" fill="#d3d3d3"/>
</svg></span></div>
<div class="c td" style="left:713px;top:612px;width:93px;height:52px"><svg class="one" viewBox="0 -1466 1139 1466"><path d="M813 0 H643 V-1147 C590 -1106 533 -1065 463 -1024 C393 -983 330 -952 273 -930 V-1104 C373 -1151 460 -1208 535 -1274 C610 -1340 663 -1404 695 -1466 H813 Z"/></svg><svg class="one" viewBox="0 -1466 1139 1466"><path d="M813 0 H643 V-1147 C590 -1106 533 -1065 463 -1024 C393 -983 330 -952 273 -930 V-1104 C373 -1151 460 -1208 535 -1274 C610 -1340 663 -1404 695 -1466 H813 Z"/></svg>-39</div>
<div class="c td" style="left:808px;top:612px;width:132px;height:52px">百家乐</div>
<div class="c td" style="left:942px;top:612px;width:81px;height:52px">AS<svg class="one" viewBox="0 -1466 1139 1466"><path d="M813 0 H643 V-1147 C590 -1106 533 -1065 463 -1024 C393 -983 330 -952 273 -930 V-1104 C373 -1151 460 -1208 535 -1274 C610 -1340 663 -1404 695 -1466 H813 Z"/></svg></div>
<div class="c td" style="left:1025px;top:612px;width:149px;height:52px"><span class="blue">闲</span>(6)&nbsp;<span class="red">庄</span>(7)</div>
<div class="c td" style="left:1176px;top:612px;width:108px;height:52px"><span class="blue">20.00</span></div>
<div class="c td" style="left:1286px;top:612px;width:131px;height:52px">20.00</div>
<div class="c td" style="left:1419px;top:612px;width:106px;height:52px"><span class="red">-20.00</span></div>
<div class="c td" style="left:1527px;top:612px;width:377px;height:52px"><svg class="one" viewBox="0 -1466 1139 1466"><path d="M813 0 H643 V-1147 C590 -1106 533 -1065 463 -1024 C393 -983 330 -952 273 -930 V-1104 C373 -1151 460 -1208 535 -1274 C610 -1340 663 -1404 695 -1466 H813 Z"/></svg>22.87/<svg class="one" viewBox="0 -1466 1139 1466"><path d="M813 0 H643 V-1147 C590 -1106 533 -1065 463 -1024 C393 -983 330 -952 273 -930 V-1104 C373 -1151 460 -1208 535 -1274 C610 -1340 663 -1404 695 -1466 H813 Z"/></svg>02.87</div>
<div class="c td" style="left:16px;top:666px;width:264px;height:52px">2025-05-<svg class="one" viewBox="0 -1466 1139 1466"><path d="M813 0 H643 V-1147 C590 -1106 533 -1065 463 -1024 C393 -983 330 -952 273 -930 V-1104 C373 -1151 460 -1208 535 -1274 C610 -1340 663 -1404 695 -1466 H813 Z"/></svg>9 06:24:<svg class="one" viewBox="0 -1466 1139 1466"><path d="M813 0 H643 V-1147 C590 -1106 533 -1065 463 -1024 C393 -983 330 -952 273 -930 V-1104 C373 -1151 460 -1208 535 -1274 C610 -1340 663 -1404 695 -1466 H813 Z"/></svg>4</div>
<div class="c td" style="left:282px;top:666px;width:199px;height:52px">5225<svg class="one" viewBox="0 -1466 1139 1466"><path d="M813 0 H643 V-1147 C590 -1106 533 -1065 463 -1024 C393 -983 330 -952 273 -930 V-1104 C373 -1151 460 -1208 535 -1274 C610 -1340 663 -1404 695 -1466 H813 Z"/></svg>3289<svg class="one" viewBox="0 -1466 1139 1466"><path d="M813 0 H643 V-1147 C590 -1106 533 -1065 463 -1024 C393 -983 330 -952 273 -930 V-1104 C373 -1151 460 -1208 535 -1274 C610 -1340 663 -1404 695 -1466 H813 Z"/></svg><svg class="one" viewBox="0 -1466 1139 1466"><path d="M813 0 H643 V-1147 C590 -1106 533 -1065 463 -1024 C393 -983 330 -952 273 -930 V-1104 C373 -1151 460 -1208 535 -1274 C610 -1340 663 -1404 695 -1466 H813 Z"/></svg>9</div>
<div class="c td" style="left:483px;top:666px;width:228px;height:52px">620806878<span style="display:inline-block;width:36px;height:36px;margin-left:4px"><svg width="36" height="36" viewBox="0 0 36 36" style="display:block"><rect x="0.5" y="0.5" width="35" height="35" rx="5" fill="#f8f8f8" stroke="#e9e9e9"/>
<path d="M6.5 6.5 H22.2 L29.5 12 V28.5 H6.5 Z" fill="#f6f6f6" stroke="#c9c9c9" stroke-width="1"/><path d="M22 6.5 V11.5 H29.5 Z" fill="#fdfdfd" stroke="#c9c9c9" stroke-width="1" stroke-linejoin="round"/>
<rect x="14" y="13.9" width="8.9" height="6.9" fill="#c4c4c4"/><path d="M10.1 13.9 L11.5 13.9 L14.2 15.3 V19.4 L11.5 20.8 L10.1 20.8 Z" fill="#c4c4c4"/>
<circle cx="24.2" cy="23.7" r="8.7" fill="#f8f8f8"/>
<circle cx="24.2" cy="23.7" r="7.2" fill="#f6f6f6" stroke="#c9c9c9" stroke-width="1"/>
<circle cx="21.1" cy="20.6" r="1.9" fill="#c9c9c9"/><circle cx="25.7" cy="19.6" r="1.9" fill="#c9c9c9"/><circle cx="28" cy="23.4" r="1.9" fill="#c9c9c9"/><circle cx="24.5" cy="27" r="1.9" fill="#c9c9c9"/><circle cx="20.4" cy="24.9" r="1.9" fill="#c9c9c9"/><rect x="23.6" y="23.1" width="1.2" height="0.8" fill="#d3d3d3"/>
</svg></span></div>
<div class="c td" style="left:713px;top:666px;width:93px;height:52px"><svg class="one" viewBox="0 -1466 1139 1466"><path d="M813 0 H643 V-1147 C590 -1106 533 -1065 463 -1024 C393 -983 330 -952 273 -930 V-1104 C373 -1151 460 -1208 535 -1274 C610 -1340 663 -1404 695 -1466 H813 Z"/></svg><svg class="one" viewBox="0 -1466 1139 1466"><path d="M813 0 H643 V-1147 C590 -1106 533 -1065 463 -1024 C393 -983 330 -952 273 -930 V-1104 C373 -1151 460 -1208 535 -1274 C610 -1340 663 -1404 695 -1466 H813 Z"/></svg>-38</div>
<div class="c td" style="left:808px;top:666px;width:132px;height:52px">百家乐</div>
<div class="c td" style="left:942px;top:666px;width:81px;height:52px">AS<svg class="one" viewBox="0 -1466 1139 1466"><path d="M813 0 H643 V-1147 C590 -1106 533 -1065 463 -1024 C393 -983 330 -952 273 -930 V-1104 C373 -1151 460 -1208 535 -1274 C610 -1340 663 -1404 695 -1466 H813 Z"/></svg></div>
<div class="c td" style="left:1025px;top:666px;width:149px;height:52px"><span class="blue">闲</span>(<svg class="one" viewBox="0 -1466 1139 1466"><path d="M813 0 H643 V-1147 C590 -1106 533 -1065 463 -1024 C393 -983 330 -952 273 -930 V-1104 C373 -1151 460 -1208 535 -1274 C610 -1340 663 -1404 695 -1466 H813 Z"/></svg>)&nbsp;<span class="red">庄</span>(8)</div>
<div class="c td" style="left:1176px;top:666px;width:108px;height:52px"><span class="blue">20.00</span></div>
<div class="c td" style="left:1286px;top:666px;width:131px;height:52px">20.00</div>
<div class="c td" style="left:1419px;top:666px;width:106px;height:52px"><svg class="one" viewBox="0 -1466 1139 1466"><path d="M813 0 H643 V-1147 C590 -1106 533 -1065 463 -1024 C393 -983 330 -952 273 -930 V-1104 C373 -1151 460 -1208 535 -1274 C610 -1340 663 -1404 695 -1466 H813 Z"/></svg>9.00</div>
<div class="c td" style="left:1527px;top:666px;width:377px;height:52px"><svg class="one" viewBox="0 -1466 1139 1466"><path d="M813 0 H643 V-1147 C590 -1106 533 -1065 463 -1024 C393 -983 330 -952 273 -930 V-1104 C373 -1151 460 -1208 535 -1274 C610 -1340 663 -1404 695 -1466 H813 Z"/></svg>03.87/<svg class="one" viewBox="0 -1466 1139 1466"><path d="M813 0 H643 V-1147 C590 -1106 533 -1065 463 -1024 C393 -983 330 -952 273 -930 V-1104 C373 -1151 460 -1208 535 -1274 C610 -1340 663 -1404 695 -1466 H813 Z"/></svg>22.87</div>
<div class="a" style="left:15px;top:718px;width:1890px;height:74px;background:#e0e0e0;border-radius:0 0 4px 4px"></div>
<div class="c tf" style="left:16px;top:718px;width:264px;height:36px">小计</div>
<div class="c tf" style="left:282px;top:718px;width:199px;height:36px">8</div>
<div class="c tf" style="left:483px;top:718px;width:228px;height:36px"></div>
<div class="c tf" style="left:713px;top:718px;width:93px;height:36px"></div>
<div class="c tf" style="left:808px;top:718px;width:132px;height:36px"></div>
<div class="c tf" style="left:942px;top:718px;width:81px;height:36px"></div>
<div class="c tf" style="left:1025px;top:718px;width:149px;height:36px"></div>
<div class="c tf" style="left:1176px;top:718px;width:108px;height:36px"><svg class="one" viewBox="0 -1466 1139 1466"><path d="M813 0 H643 V-1147 C590 -1106 533 -1065 463 -1024 C393 -983 330 -952 273 -930 V-1104 C373 -1151 460 -1208 535 -1274 C610 -1340 663 -1404 695 -1466 H813 Z"/></svg>90.00</div>
<div class="c tf" style="left:1286px;top:718px;width:131px;height:36px"><svg class="one" viewBox="0 -1466 1139 1466"><path d="M813 0 H643 V-1147 C590 -1106 533 -1065 463 -1024 C393 -983 330 -952 273 -930 V-1104 C373 -1151 460 -1208 535 -1274 C610 -1340 663 -1404 695 -1466 H813 Z"/></svg>70.00</div>
<div class="c tf" style="left:1419px;top:718px;width:106px;height:36px">88.00</div>
<div class="c tf" style="left:1527px;top:718px;width:377px;height:36px"></div>
<div class="c tf bl" style="left:16px;top:756px;width:264px;height:36px">总计</div>
<div class="c tf" style="left:282px;top:756px;width:199px;height:36px">8</div>
<div class="c tf" style="left:483px;top:756px;width:228px;height:36px"></div>
<div class="c tf" style="left:713px;top:756px;width:93px;height:36px"></div>
<div class="c tf" style="left:808px;top:756px;width:132px;height:36px"></div>
<div class="c tf" style="left:942px;top:756px;width:81px;height:36px"></div>
<div class="c tf" style="left:1025px;top:756px;width:149px;height:36px"></div>
<div class="c tf" style="left:1176px;top:756px;width:108px;height:36px"><svg class="one" viewBox="0 -1466 1139 1466"><path d="M813 0 H643 V-1147 C590 -1106 533 -1065 463 -1024 C393 -983 330 -952 273 -930 V-1104 C373 -1151 460 -1208 535 -1274 C610 -1340 663 -1404 695 -1466 H813 Z"/></svg>90.00</div>
<div class="c tf" style="left:1286px;top:756px;width:131px;height:36px"><svg class="one" viewBox="0 -1466 1139 1466"><path d="M813 0 H643 V-1147 C590 -1106 533 -1065 463 -1024 C393 -983 330 -952 273 -930 V-1104 C373 -1151 460 -1208 535 -1274 C610 -1340 663 -1404 695 -1466 H813 Z"/></svg>70.00</div>
<div class="c tf" style="left:1419px;top:756px;width:106px;height:36px">88.00</div>
<div class="c tf br" style="left:1527px;top:756px;width:377px;height:36px"></div>
</body></html>
